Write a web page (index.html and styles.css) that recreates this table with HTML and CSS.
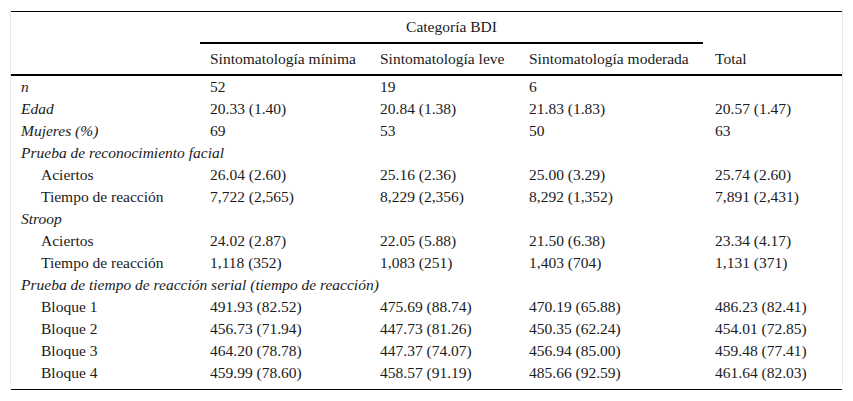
FILE: index.html
```html
<!DOCTYPE html>
<html lang="es">
<head>
<meta charset="utf-8">
<link rel="stylesheet" href="styles.css">
</head>
<body>
<div class="frame">
  <table class="data">
    <colgroup>
      <col class="c1"><col class="c2"><col class="c3"><col class="c4"><col class="c5">
    </colgroup>
    <thead>
      <tr class="h1">
        <th></th>
        <th colspan="3" class="cat"><div class="cat-in">Categoría BDI</div></th>
        <th></th>
      </tr>
      <tr class="h2">
        <th></th>
        <th>Sintomatología mínima</th>
        <th>Sintomatología leve</th>
        <th>Sintomatología moderada</th>
        <th>Total</th>
      </tr>
    </thead>
    <tbody>
      <tr><td class="it">n</td><td>52</td><td>19</td><td>6</td><td></td></tr>
      <tr><td class="it">Edad</td><td>20.33 (1.40)</td><td>20.84 (1.38)</td><td>21.83 (1.83)</td><td>20.57 (1.47)</td></tr>
      <tr><td class="it">Mujeres (%)</td><td>69</td><td>53</td><td>50</td><td>63</td></tr>
      <tr><td class="it" colspan="5">Prueba de reconocimiento facial</td></tr>
      <tr><td class="ind">Aciertos</td><td>26.04 (2.60)</td><td>25.16 (2.36)</td><td>25.00 (3.29)</td><td>25.74 (2.60)</td></tr>
      <tr><td class="ind">Tiempo de reacción</td><td>7,722 (2,565)</td><td>8,229 (2,356)</td><td>8,292 (1,352)</td><td>7,891 (2,431)</td></tr>
      <tr><td class="it" colspan="5">Stroop</td></tr>
      <tr><td class="ind">Aciertos</td><td>24.02 (2.87)</td><td>22.05 (5.88)</td><td>21.50 (6.38)</td><td>23.34 (4.17)</td></tr>
      <tr><td class="ind">Tiempo de reacción</td><td>1,118 (352)</td><td>1,083 (251)</td><td>1,403 (704)</td><td>1,131 (371)</td></tr>
      <tr><td class="it" colspan="5">Prueba de tiempo de reacción serial (tiempo de reacción)</td></tr>
      <tr><td class="ind">Bloque 1</td><td>491.93 (82.52)</td><td>475.69 (88.74)</td><td>470.19 (65.88)</td><td>486.23 (82.41)</td></tr>
      <tr><td class="ind">Bloque 2</td><td>456.73 (71.94)</td><td>447.73 (81.26)</td><td>450.35 (62.24)</td><td>454.01 (72.85)</td></tr>
      <tr><td class="ind">Bloque 3</td><td>464.20 (78.78)</td><td>447.37 (74.07)</td><td>456.94 (85.00)</td><td>459.48 (77.41)</td></tr>
      <tr><td class="ind">Bloque 4</td><td>459.99 (78.60)</td><td>458.57 (91.19)</td><td>485.66 (92.59)</td><td>461.64 (82.03)</td></tr>
    </tbody>
  </table>
</div>
<div class="bottom-rule"></div>
</body>
</html>
```

FILE: styles.css
```css
html, body {
  margin: 0;
  padding: 0;
  background: #ffffff;
}

body {
  font-family: "Liberation Serif", "Times New Roman", serif;
  font-size: 15.5px;
  color: #1a1a1a;
}

.frame {
  margin: 9px 0 0 10px;
  width: 831px;
  padding-top: 2px;
  border-left: 1px solid #e6e6e6;
  border-right: 1px solid #e6e6e6;
}

.data {
  width: 831px;
  border-collapse: collapse;
  table-layout: fixed;
  border-top: 1px solid #000;
}

.c1 { width: 189px; }
.c2 { width: 170px; }
.c3 { width: 149px; }
.c4 { width: 186px; }
.c5 { width: 137px; }

.data th,
.data td {
  padding: 0 0 0 10px;
  text-align: left;
  font-weight: normal;
  white-space: nowrap;
  vertical-align: middle;
}

.h1 th {
  height: 30px;
  line-height: 30px;
}

.h1 th.cat {
  padding: 0;
  position: relative;
}

.cat-in {
  text-align: center;
  margin-right: 2px;
  border-bottom: 2px solid #000;
  height: 30px;
  line-height: 30px;
}

.h2 th {
  height: 30px;
  line-height: 30px;
  border-bottom: 2px solid #000;
}

.data tbody td {
  height: 22px;
  line-height: 22px;
}

.it {
  font-style: italic;
}

.data td.ind {
  padding-left: 30px;
}

.bottom-rule {
  margin: 5px 0 0 11px;
  width: 831px;
  height: 1px;
  background: #000;
}
```
